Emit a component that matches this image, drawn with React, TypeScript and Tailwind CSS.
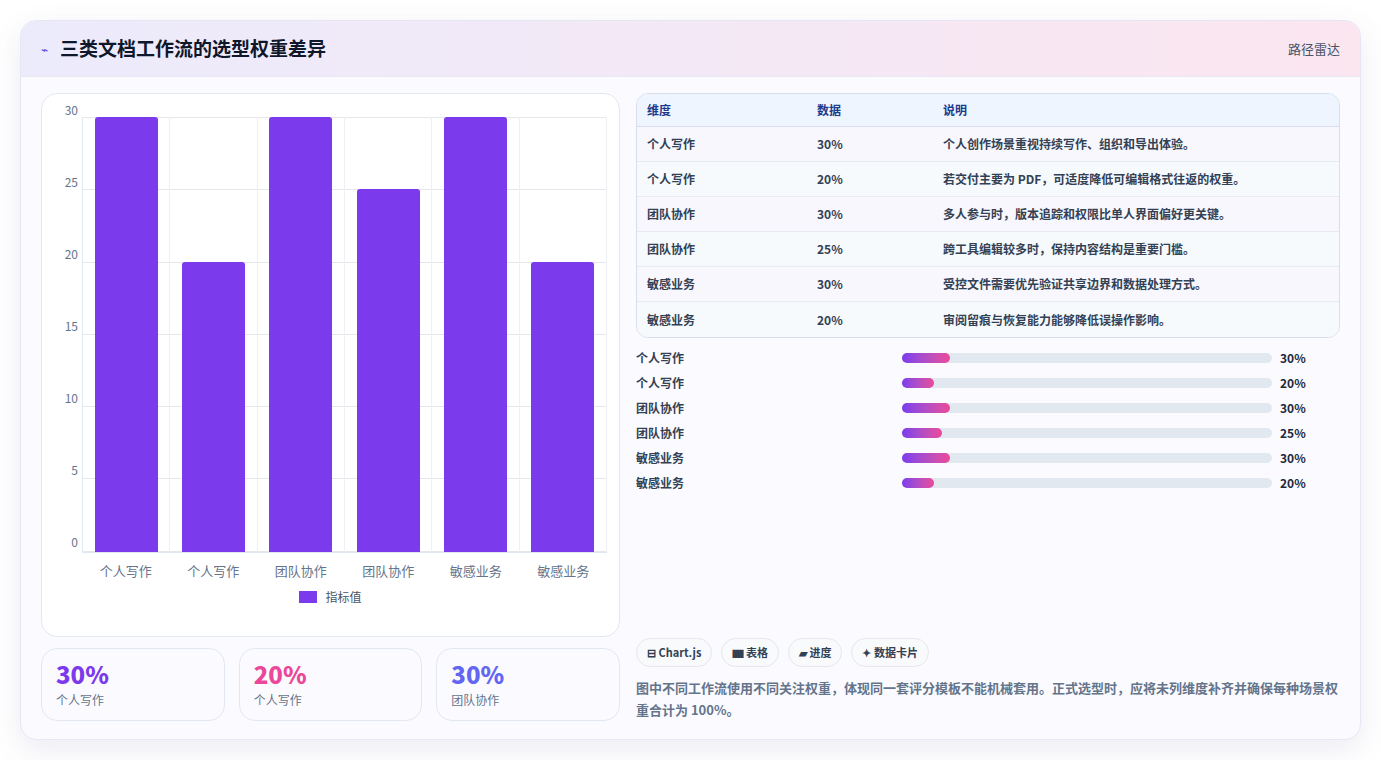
const font = { fontFamily: '"Noto Sans CJK SC", "Noto Sans", sans-serif' };

const bars = [
  { label: '个人写作', v: 30 },
  { label: '个人写作', v: 20 },
  { label: '团队协作', v: 30 },
  { label: '团队协作', v: 25 },
  { label: '敏感业务', v: 30 },
  { label: '敏感业务', v: 20 },
];

const rows = [
  { d: '个人写作', v: '30%', n: '个人创作场景重视持续写作、组织和导出体验。' },
  { d: '个人写作', v: '20%', n: '若交付主要为 PDF，可适度降低可编辑格式往返的权重。' },
  { d: '团队协作', v: '30%', n: '多人参与时，版本追踪和权限比单人界面偏好更关键。' },
  { d: '团队协作', v: '25%', n: '跨工具编辑较多时，保持内容结构是重要门槛。' },
  { d: '敏感业务', v: '30%', n: '受控文件需要优先验证共享边界和数据处理方式。' },
  { d: '敏感业务', v: '20%', n: '审阅留痕与恢复能力能够降低误操作影响。' },
];

function Chart() {
  const ticks = [30, 25, 20, 15, 10, 5, 0];
  return (
    <div className="h-[544px] rounded-2xl border border-[#e2e8f0] bg-white px-3 pt-4 pb-3 flex flex-col">
      <div className="flex h-[470px]">
        <div className="w-[28px] h-[446px] flex flex-col justify-between text-[12px] text-[#64748b] text-right pr-1 -mt-[7px]">
          {ticks.map((t) => (
            <div key={t} className="leading-[14px]">{t}</div>
          ))}
        </div>
        <div className="flex-1 flex flex-col">
          <div className="relative h-[446px] mt-[7px] border-l border-b border-[#e2e8f0]">
            <div className="absolute inset-0 flex flex-col justify-between">
              {ticks.map((t) => (
                <div key={t} className="h-px bg-[#e5e7eb]" />
              ))}
            </div>
            <div className="absolute inset-0 flex">
              {bars.map((b, i) => (
                <div key={i} className="flex-1 flex items-end justify-center border-r border-[#eef0f4]">
                  <div className="w-[63px] bg-[#7c3aed] rounded-t-[3px]" style={{ height: `${(b.v / 30) * 100}%` }} />
                </div>
              ))}
            </div>
          </div>
          <div className="flex pt-[8px]">
            {bars.map((b, i) => (
              <div key={i} className="flex-1 text-center text-[13px] text-[#64748b]">{b.label}</div>
            ))}
          </div>
        </div>
      </div>
      <div className="flex items-center justify-center gap-2 mt-[8px] text-[12px] text-[#475569]">
        <span className="w-[18px] h-[12px] bg-[#7c3aed]" />
        指标值
      </div>
    </div>
  );
}

function Stat({ v, label, color }: { v: string; label: string; color: string }) {
  return (
    <div className="flex-1 h-[73px] rounded-2xl border border-[#e2e8f0] bg-[#fbfbff] px-[14px] pt-[10px]">
      <div className={`text-[24px] font-extrabold leading-[30px] ${color}`}>{v}</div>
      <div className="text-[12px] text-[#64748b] mt-[2px]">{label}</div>
    </div>
  );
}

export default function App() {
  return (
    <div className="min-h-[760px] bg-white p-5" style={font}>
      <div className="h-[720px] rounded-2xl border border-[#e5e7f5] bg-[#fbfbff] shadow-[0_10px_30px_rgba(100,100,160,0.12)] overflow-hidden flex flex-col">
        <div className="h-[56px] flex items-center justify-between px-5 bg-gradient-to-r from-[#ecebfc] to-[#fbe6f0] border-b border-[#ebe8f5]">
          <div className="flex items-center gap-3">
            <span className="text-[#4f46e5] text-[12px]">⌁</span>
            <span className="text-[19px] font-bold text-[#0f172a]">三类文档工作流的选型权重差异</span>
          </div>
          <span className="text-[13px] text-[#475569]">路径雷达</span>
        </div>
        <div className="flex-1 flex gap-4 px-5 pt-4">
          <div className="w-[579px] flex flex-col gap-[11px]">
            <Chart />
            <div className="flex gap-[14px]">
              <Stat v="30%" label="个人写作" color="text-[#7c3aed]" />
              <Stat v="20%" label="个人写作" color="text-[#ec4899]" />
              <Stat v="30%" label="团队协作" color="text-[#6366f1]" />
            </div>
          </div>
          <div className="flex-1 flex flex-col">
            <div className="rounded-xl border border-[#d9dfea] overflow-hidden bg-white">
              <div className="flex h-[33px] items-center bg-[#eef5fe] border-b border-[#d9dfea] text-[12px] font-bold text-[#1e3a8a] px-[10px]">
                <div className="w-[170px]">维度</div>
                <div className="w-[126px]">数据</div>
                <div>说明</div>
              </div>
              {rows.map((r, i) => (
                <div key={i} className={`flex h-[35px] items-center text-[12px] font-semibold text-[#334155] px-[10px] ${i < 5 ? 'border-b border-[#e8ecf2]' : ''} ${i % 2 ? 'bg-[#f7fafc]' : 'bg-[#f8f7fd]'}`}>
                  <div className="w-[170px]">{r.d}</div>
                  <div className="w-[126px]">{r.v}</div>
                  <div>{r.n}</div>
                </div>
              ))}
            </div>
            <div className="flex flex-col gap-[9px] mt-[12px]">
              {bars.map((b, i) => (
                <div key={i} className="flex items-center h-[16px] text-[12px] font-semibold text-[#334155]">
                  <div className="w-[266px]">{b.label}</div>
                  <div className="w-[370px] h-[10px] rounded-full bg-[#e2e8f0]">
                    <div className="h-full rounded-full bg-gradient-to-r from-[#7c3aed] to-[#ec4899]" style={{ width: `${b.v * 1.6}px` }} />
                  </div>
                  <div className="ml-2 font-bold text-[#1e293b]">{b.v}%</div>
                </div>
              ))}
            </div>
            <div className="mt-auto pb-[18px]">
              <div className="flex gap-[9px]">
                {['⊟ Chart.js', '▆ 表格', '▰ 进度', '✦ 数据卡片'].map((t) => (
                  <span key={t} className="h-[29px] px-[10px] flex items-center rounded-full border border-[#e5e7eb] bg-[#f8fafc] text-[11px] font-bold text-[#334155]">{t}</span>
                ))}
              </div>
              <p className="mt-[10px] text-[13px] leading-[22px] font-semibold text-[#64748b]">
                图中不同工作流使用不同关注权重，体现同一套评分模板不能机械套用。正式选型时，应将未列维度补齐并确保每种场景权重合计为 100%。
              </p>
            </div>
          </div>
        </div>
      </div>
    </div>
  );
}
